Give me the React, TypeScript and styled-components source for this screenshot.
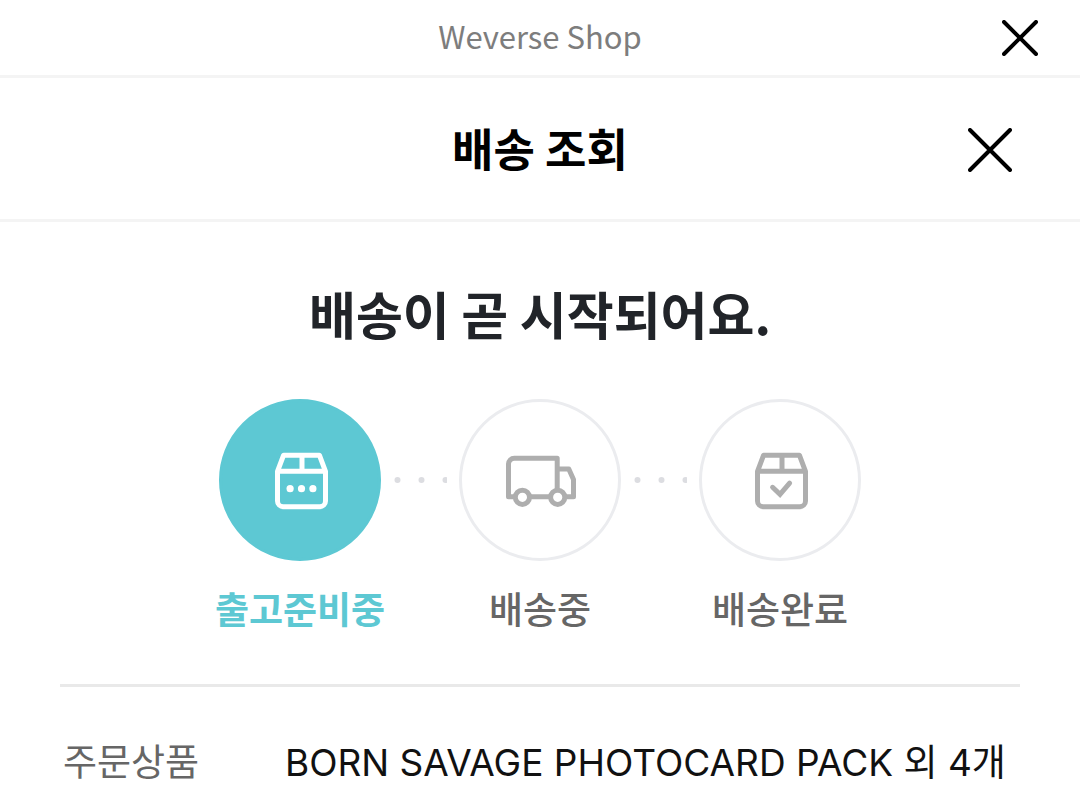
import React from "react";
import styled, { createGlobalStyle } from "styled-components";

const GlobalStyle = createGlobalStyle`
  *, *::before, *::after { box-sizing: border-box; }
  body {
    margin: 0;
    background: #fff;
    color: #111;
    font-family: "Noto Sans CJK KR", sans-serif;
  }
  h1, h2, p, ol, dl, dd { margin: 0; padding: 0; }
`;

const Bar = styled.header<{ $tall?: boolean }>`
  display: grid;
  grid-template-columns: 1fr auto 1fr;
  align-items: center;
  height: ${(p) => (p.$tall ? 144 : 78)}px;
  padding: ${(p) => (p.$tall ? "3px 68px 0" : "0 42px")};
  border-bottom: 3px solid #f4f4f4;
`;

const SiteName = styled.p`
  grid-column: 2;
  padding-bottom: 4px;
  color: #7d7d7d;
  font-size: 31px;
  line-height: 48px;
`;

const PageTitle = styled.h1`
  grid-column: 2;
  padding-bottom: 4px;
  color: #000;
  font-size: 45px;
  font-weight: 700;
  line-height: 60px;
`;

const CloseButton = styled.button`
  grid-column: 3;
  justify-self: end;
  display: flex;
  padding: 0;
  border: 0;
  background: none;
  color: #000;
  cursor: pointer;
`;

const Content = styled.main`
  padding: 0 60px;
`;

const Status = styled.h2`
  padding: 54px 0 48px;
  color: #212429;
  font-size: 51px;
  font-weight: 700;
  line-height: 75px;
  text-align: center;
`;

const Steps = styled.ol`
  display: flex;
  justify-content: center;
  padding-bottom: 47px;
  border-bottom: 3px solid #e9e9e9;
  list-style: none;
`;

const Step = styled.li<{ $active?: boolean }>`
  display: flex;
  flex-direction: column;
  align-items: center;
  gap: 19px;
  width: 168px;
  color: ${(p) => (p.$active ? "#5dc8d3" : "#666")};
  font-size: 37px;
  font-weight: ${(p) => (p.$active ? 700 : 500)};
  line-height: 57px;
  white-space: nowrap;
`;

const StepCircle = styled.span<{ $active?: boolean }>`
  display: flex;
  align-items: center;
  justify-content: center;
  width: 162px;
  height: 162px;
  border: 3px solid ${(p) => (p.$active ? "#5dc8d3" : "#ebecef")};
  border-radius: 50%;
  background: ${(p) => (p.$active ? "#5dc8d3" : "#fff")};
  color: ${(p) => (p.$active ? "#fff" : "#aeaeae")};
`;

const Connector = styled.li`
  display: flex;
  align-items: center;
  justify-content: center;
  width: 72px;
  height: 162px;
`;

const Details = styled.dl`
  padding: 45px 0 18px;
`;

const DetailRow = styled.div`
  display: flex;
  align-items: baseline;
  padding-left: 3px;
  font-size: 37px;
  line-height: 57px;
`;

const DetailLabel = styled.dt`
  flex: 0 0 222px;
  color: #666;
`;

const DetailValue = styled.dd`
  flex: 1;
  min-width: 0;
  font-family: Inter, "Noto Sans CJK KR", sans-serif;
  white-space: nowrap;
`;

function CloseIcon({ size }: { size: number }) {
  const end = size - 2;
  return (
    <svg width={size} height={size} fill="none" stroke="currentColor" strokeWidth="4" strokeLinecap="round" aria-hidden="true">
      <path d={`M2 2L${end} ${end}M${end} 2L2 ${end}`} />
    </svg>
  );
}

function BoxIcon({ children }: { children: React.ReactNode }) {
  return (
    <svg width="72" height="72" viewBox="0 0 72 72" fill="none" stroke="currentColor" strokeWidth="5" strokeLinejoin="round" aria-hidden="true">
      <path d="M13.5 27.3L19.6 11.2H55.4L61.5 27.3V57a5.8 5.8 0 0 1-5.8 5.8H19.3a5.8 5.8 0 0 1-5.8-5.8ZM13.5 27.3H61.5M38 11.2V27.3" />
      {children}
    </svg>
  );
}

function PreparingIcon() {
  return (
    <BoxIcon>
      <g fill="currentColor" stroke="none">
        <circle cx="26.1" cy="44.7" r="3.6" />
        <circle cx="37.5" cy="44.7" r="3.6" />
        <circle cx="48.9" cy="44.7" r="3.6" />
      </g>
    </BoxIcon>
  );
}

function DeliveredIcon() {
  return (
    <BoxIcon>
      <path d="M28.6 43.3L36 50.3L45.6 39.2" strokeLinecap="round" strokeLinejoin="miter" />
    </BoxIcon>
  );
}

function TruckIcon() {
  return (
    <svg width="72" height="72" viewBox="0 0 72 72" fill="none" stroke="currentColor" strokeWidth="5" strokeLinejoin="round" aria-hidden="true">
      <path d="M11 52.8H4.5V20a5.8 5.8 0 0 1 5.8-5.8H53.2V46M26 52.8H46M53.2 25H64.8L69.5 35.5V52.8H61" />
      <circle cx="18.4" cy="53.3" r="7.1" />
      <circle cx="53.7" cy="53.3" r="7.1" />
    </svg>
  );
}

function Dots() {
  return (
    <Connector aria-hidden="true">
      <svg width="54" height="6" fill="#dcdde1">
        <circle cx="4.5" cy="3" r="3" />
        <circle cx="28.5" cy="3" r="3" />
        <circle cx="52.5" cy="3" r="3" />
      </svg>
    </Connector>
  );
}

export default function App() {
  return (
    <>
      <GlobalStyle />
      <Bar>
        <SiteName>Weverse Shop</SiteName>
        <CloseButton type="button" aria-label="창 닫기">
          <CloseIcon size={36} />
        </CloseButton>
      </Bar>
      <Bar $tall>
        <PageTitle>배송 조회</PageTitle>
        <CloseButton type="button" aria-label="배송 조회 닫기">
          <CloseIcon size={44} />
        </CloseButton>
      </Bar>
      <Content>
        <Status>배송이 곧 시작되어요.</Status>
        <Steps>
          <Step $active aria-current="step">
            <StepCircle $active><PreparingIcon /></StepCircle>
            출고준비중
          </Step>
          <Dots />
          <Step>
            <StepCircle><TruckIcon /></StepCircle>
            배송중
          </Step>
          <Dots />
          <Step>
            <StepCircle><DeliveredIcon /></StepCircle>
            배송완료
          </Step>
        </Steps>
        <Details>
          <DetailRow>
            <DetailLabel>주문상품</DetailLabel>
            <DetailValue>BORN SAVAGE PHOTOCARD PACK 외 4개</DetailValue>
          </DetailRow>
        </Details>
      </Content>
    </>
  );
}
